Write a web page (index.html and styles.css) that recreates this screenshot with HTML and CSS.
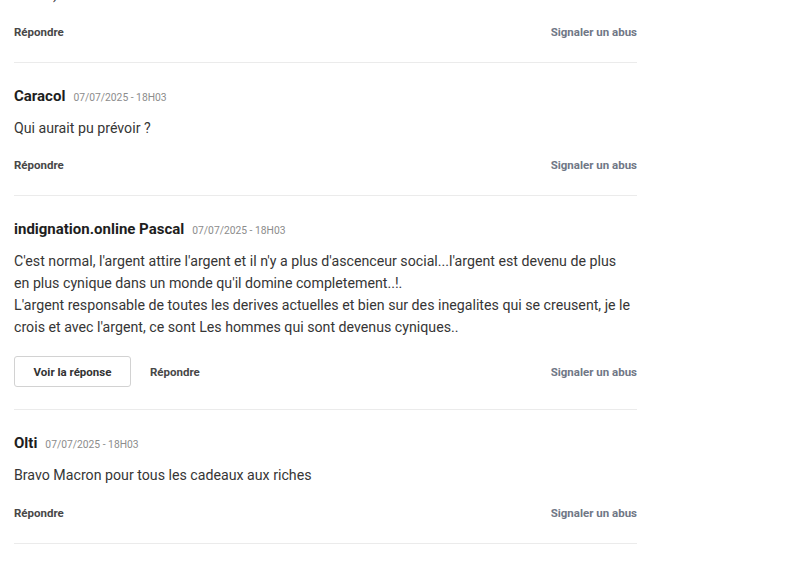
FILE: index.html
```html
<!DOCTYPE html>
<html lang="fr">
<head>
<meta charset="utf-8">
<title>Commentaires</title>
<link rel="stylesheet" href="styles.css">
</head>
<body>
<div class="thread">
  <div class="comment comment-cut">
    <p class="comment-text">Kenes).</p>
    <div class="actions">
      <div class="actions-left"><a class="reply">Répondre</a></div>
      <a class="report">Signaler un abus</a>
    </div>
  </div>

  <div class="comment">
    <div class="comment-head"><span class="author">Caracol</span><span class="date">07/07/2025 - 18H03</span></div>
    <p class="comment-text">Qui aurait pu prévoir ?</p>
    <div class="actions">
      <div class="actions-left"><a class="reply">Répondre</a></div>
      <a class="report">Signaler un abus</a>
    </div>
  </div>

  <div class="comment">
    <div class="comment-head"><span class="author">indignation.online Pascal</span><span class="date">07/07/2025 - 18H03</span></div>
    <p class="comment-text">C'est normal, l'argent attire l'argent et il n'y a plus d'ascenceur social...l'argent est devenu de plus en plus cynique dans un monde qu'il domine completement..!.<br>L'argent responsable de toutes les derives actuelles et bien sur des inegalites qui se creusent, je le crois et avec l'argent, ce sont Les hommes qui sont devenus cyniques..</p>
    <div class="actions">
      <div class="actions-left"><button class="see-reply">Voir la réponse</button><a class="reply">Répondre</a></div>
      <a class="report">Signaler un abus</a>
    </div>
  </div>

  <div class="comment">
    <div class="comment-head"><span class="author">Olti</span><span class="date">07/07/2025 - 18H03</span></div>
    <p class="comment-text">Bravo Macron pour tous les cadeaux aux riches</p>
    <div class="actions">
      <div class="actions-left"><a class="reply">Répondre</a></div>
      <a class="report">Signaler un abus</a>
    </div>
  </div>
</div>
</body>
</html>
```
FILE: styles.css
```css
html, body {
  margin: 0;
  padding: 0;
  background: #ffffff;
}

body {
  font-family: Roboto, "Liberation Sans", Arial, sans-serif;
  color: #3c3c3c;
}

.thread {
  width: 623px;
  margin-left: 14px;
}

.comment {
  padding: 23px 0 22px;
  border-bottom: 1px solid #ebebeb;
}

.comment-cut {
  padding-top: 0;
  margin-top: -16px;
}

.comment-head {
  display: flex;
  align-items: baseline;
  gap: 8px;
  line-height: 21px;
}

.author {
  font-size: 15px;
  font-weight: 700;
  color: #1e1e1e;
}

.date {
  font-size: 10.3px;
  color: #8c8c8c;
}

.comment-text {
  margin: 10px 0 0;
  max-width: 618px;
  font-size: 14.2px;
  line-height: 21.7px;
  color: #363636;
}

.comment-cut .comment-text {
  margin-top: 0;
}

.actions {
  margin-top: 18px;
  display: flex;
  justify-content: space-between;
  align-items: center;
  line-height: 16px;
}

.actions-left {
  display: flex;
  align-items: center;
  gap: 19px;
}

.reply {
  font-size: 11.5px;
  font-weight: 700;
  color: #474747;
}

.report {
  font-size: 11.5px;
  font-weight: 700;
  color: #707786;
}

.see-reply {
  font-family: inherit;
  font-size: 11.5px;
  font-weight: 700;
  color: #333333;
  background: #ffffff;
  border: 1px solid #d2d2d2;
  border-radius: 3px;
  height: 31px;
  width: 117px;
  padding: 0;
}
```
